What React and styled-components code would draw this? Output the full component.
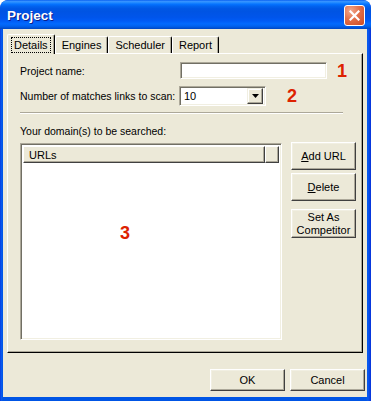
import React from 'react';
import styled, { createGlobalStyle } from 'styled-components';

const Global = createGlobalStyle`
  html, body { margin: 0; padding: 0; background: #fff; }
  body { font-family: "Liberation Sans", Arial, sans-serif; font-size: 10.5px; color: #000; }
  * { box-sizing: border-box; }
`;

const Window = styled.div`
  width: 371px;
  height: 401px;
  display: flex;
  flex-direction: column;
  background: linear-gradient(to right, #0831D9 0px, #0A5BF0 1px, #0055E5 3px, #0055E5 366px, #0A5BF0 368px, #0831D9 371px);
  border-radius: 8px 8px 0 0;
  overflow: hidden;
`;

const TitleBar = styled.div`
  height: 29px;
  flex: none;
  display: flex;
  align-items: center;
  justify-content: space-between;
  padding: 0 6px 0 7px;
  background: linear-gradient(to bottom, #0058EE 0%, #3A93FF 4%, #288EFF 8%, #127DFF 12%, #036FFC 16%, #0262EE 22%, #0057E5 30%, #0054E3 40%, #0055EB 60%, #005BF5 72%, #026AFE 82%, #0062EF 90%, #0052D6 96%, #0046C0 100%);
  border-radius: 8px 8px 0 0;
`;

const Title = styled.div`
  font-family: "Liberation Sans", Arial, sans-serif;
  font-weight: bold;
  font-size: 13.5px;
  color: #fff;
  text-shadow: 1px 1px 0 #0A1E8C;
  margin-top: 1px;
`;

const CloseBtn = styled.div`
  width: 21px;
  height: 21px;
  margin-top: 2px;
  border: 1px solid #fff;
  border-radius: 3px;
  background: radial-gradient(circle at 30% 25%, #F2A88C 0%, #E2704A 45%, #CC4A22 100%);
  display: flex;
  align-items: center;
  justify-content: center;
`;

const Body = styled.div`
  flex: 1;
  margin: 0 4px 4px 3px;
  background: #ECE9D8;
  padding: 5px 0 0 4px;
  display: flex;
  flex-direction: column;
`;

const TabRow = styled.div`
  display: flex;
  align-items: flex-end;
  height: 19px;
  position: relative;
  z-index: 2;
  font-size: 11px;
`;

const Tab = styled.div`
  height: ${p => (p.$active ? '20px' : '17px')};
  margin-bottom: ${p => (p.$active ? '-1px' : '0')};
  padding: 0 ${p => (p.$active ? '3px' : '6px')};
  display: flex;
  align-items: center;
  background: #ECE9D8;
  border-top: 1px solid #fff;
  border-left: 1px solid #fff;
  border-right: 1px solid #000;
  box-shadow: inset -1px 0 0 #ACA899;
  border-radius: 2px 2px 0 0;
`;

const FocusLabel = styled.span`
  border: 1px dotted #000;
  padding: 1px 2px 1px 2px;
  line-height: 12px;
`;

const Panel = styled.div`
  width: 356px;
  height: 300px;
  border: 1px solid;
  border-color: #fff #000 #000 #fff;
  box-shadow: inset -1px -1px 0 #ACA899;
  padding: 8px 0 0 12px;
  display: flex;
  flex-direction: column;
`;

const Row = styled.div`
  display: flex;
  align-items: center;
  height: ${p => p.$h}px;
  margin-top: ${p => p.$mt || 0}px;
`;

const Label = styled.div`
  width: ${p => p.$w}px;
  white-space: nowrap;
`;

const Sunken = styled.div`
  background: #fff;
  border: 1px solid;
  border-color: #ACA899 #fff #fff #ACA899;
  box-shadow: inset 1px 1px 0 #716F64, inset -1px -1px 0 #F1EFE2;
`;

const TextInput = styled(Sunken)`
  width: 147px;
  height: 17px;
`;

const Combo = styled(Sunken)`
  width: 87px;
  height: 20px;
  display: flex;
  align-items: center;
  justify-content: space-between;
  padding: 2px 2px 2px 4px;
  font-size: 11px;
`;

const ComboBtn = styled.div`
  width: 16px;
  height: 16px;
  background: #ECE9D8;
  border: 1px solid;
  border-color: #F1EFE2 #404040 #404040 #F1EFE2;
  box-shadow: inset -1px -1px 0 #ACA899, inset 1px 1px 0 #fff;
  display: flex;
  align-items: center;
  justify-content: center;
`;

const Marker = styled.div`
  color: #DD2200;
  font-family: "Liberation Sans", Arial, sans-serif;
  font-weight: bold;
  font-size: 18px;
  line-height: 18px;
  margin-left: ${p => p.$ml || 0}px;
`;

const Separator = styled.div`
  width: 323px;
  height: 2px;
  margin-top: 6px;
  border-top: 1px solid #ACA899;
  border-bottom: 1px solid #fff;
`;

const SectionLabel = styled.div`
  margin-top: 10px;
  line-height: 14px;
`;

const ListRow = styled.div`
  display: flex;
  margin-top: 5px;
`;

const ListBox = styled(Sunken)`
  width: 262px;
  height: 197px;
  position: relative;
  padding: 2px;
  display: flex;
  flex-direction: column;
`;

const Header = styled.div`
  display: flex;
  height: 17px;
  flex: none;
`;

const HeaderCell = styled.div`
  width: ${p => (p.$w ? `${p.$w}px` : 'auto')};
  flex: ${p => (p.$w ? 'none' : '1')};
  background: #ECE9D8;
  border: 1px solid;
  border-color: #fff #404040 #404040 #fff;
  box-shadow: inset -1px -1px 0 #ACA899;
  padding-left: 5px;
  display: flex;
  align-items: center;
  font-size: 11px;
`;

const ListMarker = styled(Marker)`
  position: absolute;
  left: 99px;
  top: 80px;
`;

const SideButtons = styled.div`
  display: flex;
  flex-direction: column;
  margin-left: 9px;
  margin-top: -1px;
`;

const Button = styled.div`
  width: ${p => p.$w}px;
  height: ${p => p.$h}px;
  margin-top: ${p => p.$mt || 0}px;
  background: #ECE9D8;
  border: 1px solid;
  border-color: #fff #404040 #404040 #fff;
  box-shadow: inset -1px -1px 0 #ACA899, inset 1px 1px 0 #F1EFE2;
  display: flex;
  align-items: center;
  justify-content: center;
  text-align: center;
  line-height: 13px;
  font-size: 11px;
`;

const Footer = styled.div`
  display: flex;
  justify-content: flex-end;
  gap: 5px;
  margin-top: 16px;
  padding-right: 2px;
`;

export default function App() {
  return (
    <>
      <Global />
      <Window>
        <TitleBar>
          <Title>Project</Title>
          <CloseBtn>
            <svg width="11" height="11" viewBox="0 0 11 11">
              <path d="M1.5 1.5 L9.5 9.5 M9.5 1.5 L1.5 9.5" stroke="#fff" strokeWidth="2.2" strokeLinecap="square" />
            </svg>
          </CloseBtn>
        </TitleBar>
        <Body>
          <TabRow>
            <Tab $active><FocusLabel>Details</FocusLabel></Tab>
            <Tab>Engines</Tab>
            <Tab>Scheduler</Tab>
            <Tab>Report</Tab>
          </TabRow>
          <Panel>
            <Row $h={17}>
              <Label $w={160}>Project name:</Label>
              <TextInput />
              <Marker $ml={10}>1</Marker>
            </Row>
            <Row $h={20} $mt={7}>
              <Label $w={159}>Number of matches links to scan:</Label>
              <Combo>
                <span>10</span>
                <ComboBtn>
                  <svg width="7" height="4" viewBox="0 0 7 4">
                    <path d="M0 0 H7 L3.5 4 Z" fill="#000" />
                  </svg>
                </ComboBtn>
              </Combo>
              <Marker $ml={21}>2</Marker>
            </Row>
            <Separator />
            <SectionLabel>Your domain(s) to be searched:</SectionLabel>
            <ListRow>
              <ListBox>
                <Header>
                  <HeaderCell $w={242}>URLs</HeaderCell>
                  <HeaderCell />
                </Header>
                <ListMarker>3</ListMarker>
              </ListBox>
              <SideButtons>
                <Button $w={65} $h={28}><span><u>A</u>dd URL</span></Button>
                <Button $w={65} $h={28} $mt={3}><span><u>D</u>elete</span></Button>
                <Button $w={65} $h={29} $mt={8}>Set As<br />Competitor</Button>
              </SideButtons>
            </ListRow>
          </Panel>
          <Footer>
            <Button $w={75} $h={22}>OK</Button>
            <Button $w={75} $h={22}>Cancel</Button>
          </Footer>
        </Body>
      </Window>
    </>
  );
}
